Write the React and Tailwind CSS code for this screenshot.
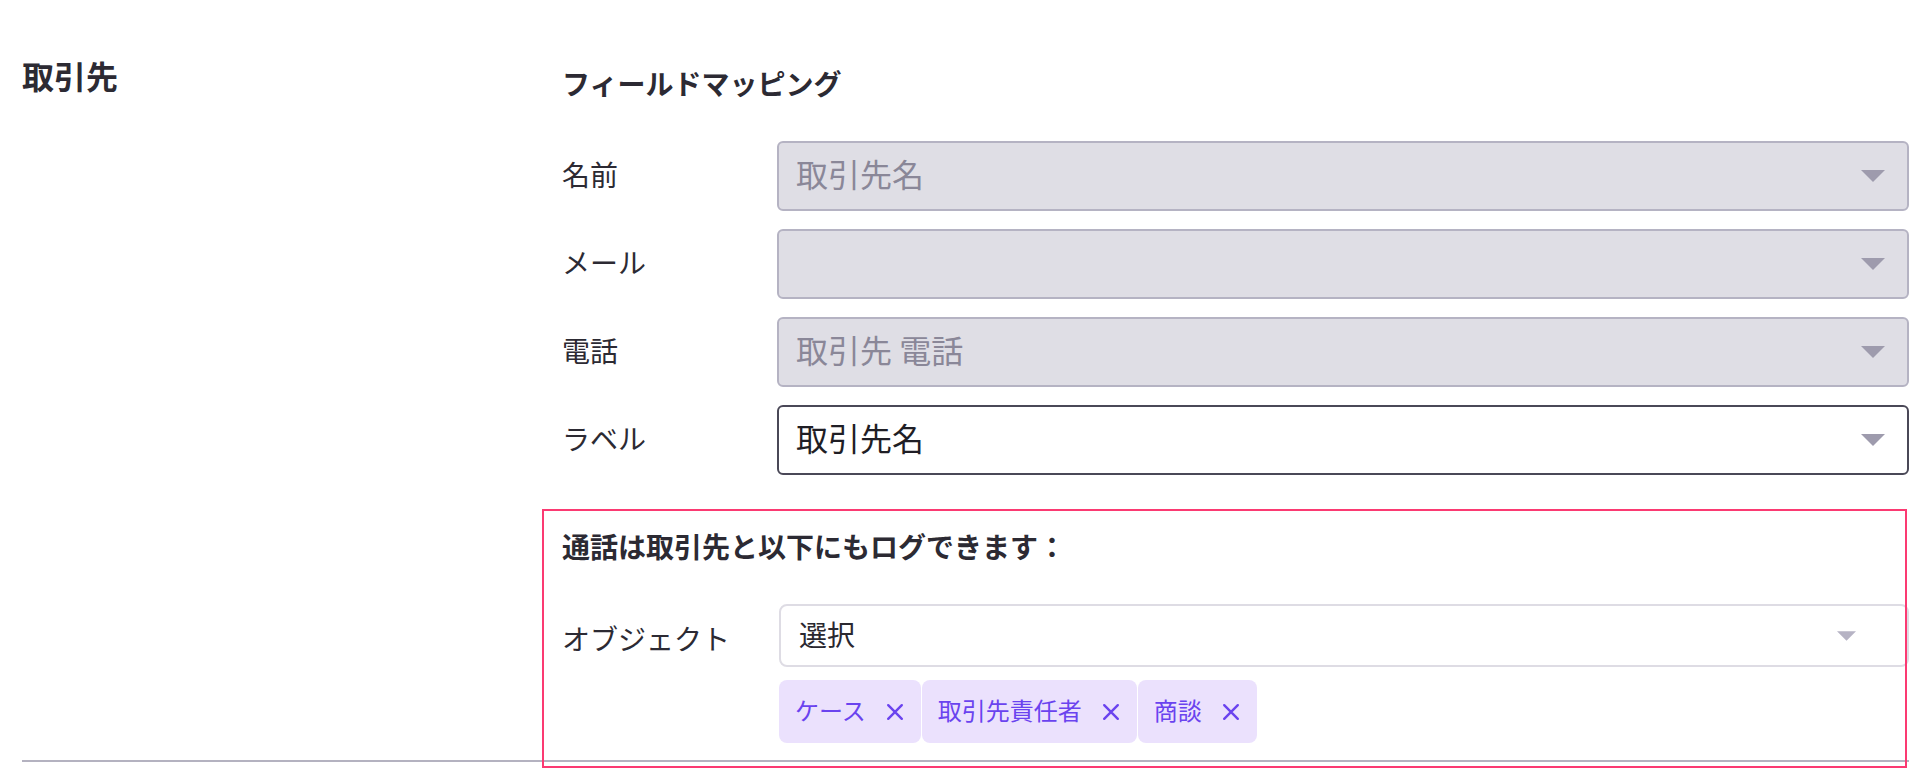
import React from 'react';

const Caret = ({ className }) => (
  <svg viewBox="0 0 24 12" className={className} aria-hidden="true">
    <path d="M0 0H24L12 12Z" fill="currentColor" />
  </svg>
);

const CloseMark = () => (
  <svg viewBox="0 0 20 20" className="h-[20px] w-[20px] text-[#6a43ef]" aria-hidden="true">
    <path d="M3.2 3.2L16.8 16.8M16.8 3.2L3.2 16.8" stroke="currentColor" strokeWidth="2.4" strokeLinecap="round" />
  </svg>
);

// greyed selects are locked mappings, the last one can be changed
const MappingSelect = ({ value, disabled }) => (
  <div
    className={`flex h-[70px] items-center justify-between rounded-[6px] border-2 pl-[17px] pr-[22px] ${
      disabled
        ? 'border-[#b5b3c3] bg-[#dfdee5] text-[#8a8798]'
        : 'border-[#4a4857] bg-white text-[#1f1e25]'
    }`}
  >
    <span className="relative -top-[3px] text-[32px] leading-none">{value}</span>
    <Caret className="h-[12px] w-[24px] text-[#9e9bad]" />
  </div>
);

const fields = [
  { label: '名前', value: '取引先名', disabled: true },
  { label: 'メール', value: '', disabled: true },
  { label: '電話', value: '取引先 電話', disabled: true },
  { label: 'ラベル', value: '取引先名', disabled: false },
];

const tags = ['ケース', '取引先責任者', '商談'];

export default function App() {
  return (
    <div className="relative h-[780px] w-full overflow-hidden bg-white pl-[22px] pr-[17px] pt-[51px] font-['Noto_Sans_CJK_JP','Noto_Sans',sans-serif] text-[#2c2a33]">
      <div className="flex">
        {/* Section title */}
        <div className="w-[540px] shrink-0">
          <h2 className="text-[32px] font-bold leading-[48px]">取引先</h2>
        </div>

        <div className="flex-1 pt-[14px]">
          <h3 className="relative -top-[2px] text-[28px] font-bold leading-[40px]">フィールドマッピング</h3>

          <div className="mt-[36px] flex flex-col gap-[18px]">
            {fields.map((f) => (
              <div key={f.label} className="flex items-center">
                <div className="relative -top-[2px] w-[215px] shrink-0 text-[28px] leading-none">{f.label}</div>
                <div className="flex-1">
                  <MappingSelect value={f.value} disabled={f.disabled} />
                </div>
              </div>
            ))}
          </div>

          <h3 className="mt-[51px] text-[28px] font-bold leading-[40px]">通話は取引先と以下にもログできます：</h3>

          <div className="mt-[38px] flex items-center">
            <div className="w-[217px] shrink-0 pt-[4px] text-[28px] leading-none">オブジェクト</div>
            <div className="flex h-[63px] flex-1 items-center justify-between rounded-[8px] border-2 border-[#dedce4] bg-white pl-[18px] pr-[51px]">
              <span className="relative -top-[2px] text-[28px] leading-none text-[#2a2830]">選択</span>
              <Caret className="h-[10px] w-[19px] text-[#b6b3c4]" />
            </div>
          </div>

          <div className="mt-[13px] flex gap-[1px] pl-[217px]">
            {tags.map((t) => (
              <div
                key={t}
                className="flex h-[63px] items-center gap-[19px] rounded-[8px] bg-[#ebe1fd] pl-[16px] pr-[16px]"
              >
                <span className="relative -top-[2px] text-[24px] leading-none text-[#6a43ef]">{t}</span>
                <CloseMark />
              </div>
            ))}
          </div>
        </div>
      </div>

      <div className="mt-[17px] h-[2px] bg-[#b4b2c0]" />

      {/* highlight frame drawn over the secondary logging block */}
      <div className="pointer-events-none absolute left-[542px] top-[509px] h-[259px] w-[1365px] border-2 border-[#fb3a72]" />
    </div>
  );
}
